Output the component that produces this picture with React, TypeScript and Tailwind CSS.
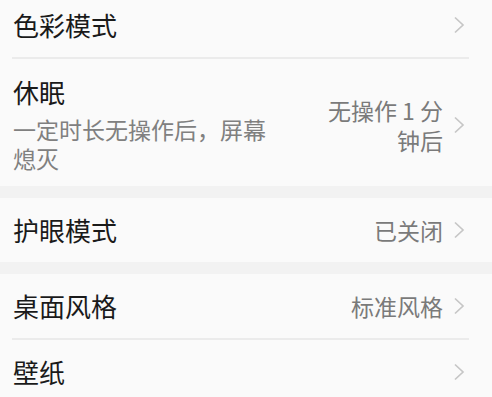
import React from 'react';

const font = { fontFamily: '"Noto Sans CJK SC", "Noto Sans", sans-serif' };

function Chevron() {
  return (
    <svg width="12" height="18" viewBox="0 0 12 18" className="shrink-0">
      <polyline points="2,1.5 10,9 2,16.5" fill="none" stroke="#c6c6c6" strokeWidth="1.7" strokeLinejoin="miter" />
    </svg>
  );
}

function Row({ title, value, sub }: { title: string; value?: React.ReactNode; sub?: React.ReactNode }) {
  if (sub) {
    return (
      <div className="flex items-center justify-between pl-[13px] pr-[27px] pt-[17px] pb-[13px] bg-[#fafafa]">
        <div>
          <div className="text-[26px] leading-[32px] text-[#1a1a1a]">{title}</div>
          <div className="mt-[7px] text-[23px] leading-[29px] text-[#808080]">{sub}</div>
        </div>
        <div className="flex items-center gap-[10px]">
          <div className="text-right text-[23px] leading-[30px] text-[#7a7a7a]">{value}</div>
          <Chevron />
        </div>
      </div>
    );
  }
  return (
    <div className="flex h-[64px] items-center justify-between pl-[13px] pr-[27px] bg-[#fafafa]">
      <div className="text-[26px] leading-[32px] text-[#1a1a1a]">{title}</div>
      <div className="flex items-center gap-[10px]">
        {value && <div className="text-[23px] leading-[30px] text-[#7a7a7a]">{value}</div>}
        <Chevron />
      </div>
    </div>
  );
}

function Divider() {
  return (
    <div className="bg-[#fafafa]">
      <div className="ml-[12px] mr-[23px] h-[2px] bg-[#ebebeb]" />
    </div>
  );
}

export default function App() {
  return (
    <div className="h-[397px] w-[492px] overflow-hidden bg-[#f2f2f2]" style={font}>
      <div className="-mt-[7px]">
        <Row title="色彩模式" />
        <Divider />
        <Row
          title="休眠"
          sub={<>一定时长无操作后，屏幕<br />熄灭</>}
          value={<>无操作 1 分<br />钟后</>}
        />
        <div className="h-[12px]" />
        <Row title="护眼模式" value="已关闭" />
        <div className="h-[12px]" />
        <Row title="桌面风格" value="标准风格" />
        <Divider />
        <Row title="壁纸" />
      </div>
    </div>
  );
}
